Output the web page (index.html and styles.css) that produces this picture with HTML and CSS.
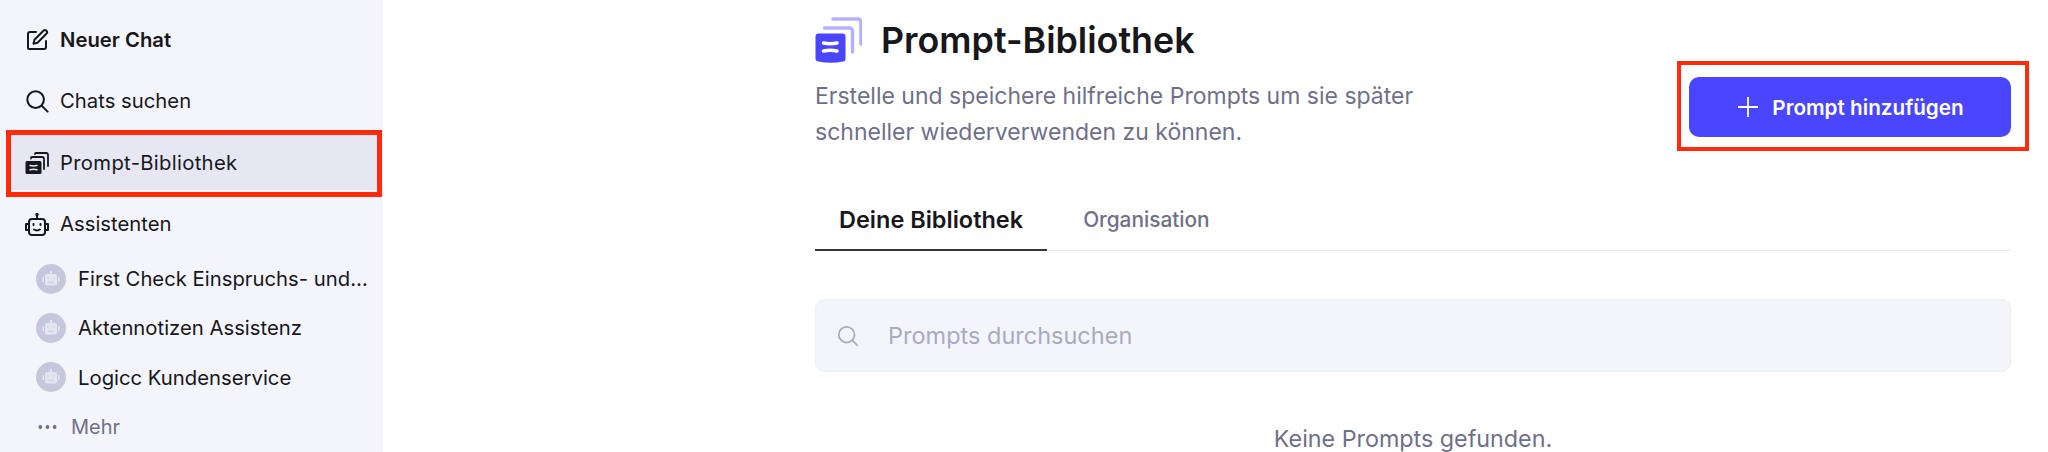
FILE: index.html
```html
<!DOCTYPE html>
<html lang="de">
<head>
<meta charset="utf-8">
<title>Prompt-Bibliothek</title>
<link rel="stylesheet" href="styles.css">
</head>
<body>
<div class="app">
  <aside class="sidebar">
    <a class="nav-item nav-strong">
      <svg class="nav-icon" viewBox="0 0 24 24" fill="none" stroke="currentColor" stroke-width="2" stroke-linecap="round" stroke-linejoin="round"><path d="M11 4H5a2 2 0 0 0-2 2v14a1 1 0 0 0 1 1h15a2 2 0 0 0 2-2v-6"/><path d="M18.400 2.800a2.100 2.100 0 0 1 3 3L12.500 14.700l-4 1 1-4z"/></svg>
      <span>Neuer Chat</span>
    </a>
    <a class="nav-item nav-search">
      <svg class="nav-icon" viewBox="-.5 -.5 26 26" fill="none" stroke="currentColor" stroke-width="2.200" stroke-linecap="round"><circle cx="11" cy="11" r="9"/><path d="M17.500 17.500 24 24"/></svg>
      <span>Chats suchen</span>
    </a>
    <a class="nav-item nav-active">
      <svg class="nav-icon" viewBox="0 0 24 24"><path d="M10 3V3a1 1 0 0 1 1-1h10a2 2 0 0 1 2 2v11" fill="none" stroke="currentColor" stroke-width="1.800" stroke-linecap="round"/><path d="M6 7.500V7a1 1 0 0 1 1-1h10a2 2 0 0 1 2 2V18" fill="none" stroke="currentColor" stroke-width="1.800" stroke-linecap="round"/><path d="M2 10h13a1.500 1.500 0 0 1 1.500 1.500V22a1.500 1.500 0 0 1-1.500 1H2A1.500 1.500 0 0 1 .5 22V11.500A1.500 1.500 0 0 1 2 10z" fill="currentColor"/><path d="M5 14.500c2.300.6 4.700.6 7 0M5 18.800c2.300-.6 4.700-.6 7 0" fill="none" stroke="#e6e7f3" stroke-width="1.500" stroke-linecap="round"/></svg>
      <span>Prompt-Bibliothek</span>
    </a>
    <a class="nav-item nav-last">
      <svg class="nav-icon" viewBox="1 0 24 24" fill="none" stroke="currentColor" stroke-width="2" stroke-linecap="round" stroke-linejoin="round"><rect x="5" y="7" width="16" height="16" rx="3"/><path d="M13 7V3"/><circle cx="13" cy="2.500" r=".8"/><path d="M5 12H2v6h3M21 12h3v6h-3"/><path d="M9.500 12v1M16.500 12v1M10 17.500c2 1.300 4 1.300 6 0"/></svg>
      <span>Assistenten</span>
    </a>
    <ul class="assistants">
      <li class="assistant">
        <svg class="avatar" viewBox="0 0 30 30"><circle cx="15" cy="15" r="15" fill="#c6c7dc"/><rect x="9" y="10" width="12" height="11.500" rx="2" fill="#e4e5f0"/><rect x="14" y="7" width="2" height="3.500" fill="#e4e5f0"/><rect x="6.500" y="13" width="1.500" height="5" fill="#e4e5f0"/><rect x="22" y="13" width="1.500" height="5" fill="#e4e5f0"/><path d="M12 13.500v1M18 13.500v1" stroke="#c6c7dc" stroke-width="1.500"/><path d="M12 17.800c2 1 4 1 6 0" stroke="#c6c7dc" stroke-width="1" fill="none"/></svg>
        <span class="assistant-name">First Check Einspruchs- und Klagebearbeitung</span>
      </li>
      <li class="assistant">
        <svg class="avatar" viewBox="0 0 30 30"><circle cx="15" cy="15" r="15" fill="#c6c7dc"/><rect x="9" y="10" width="12" height="11.500" rx="2" fill="#e4e5f0"/><rect x="14" y="7" width="2" height="3.500" fill="#e4e5f0"/><rect x="6.500" y="13" width="1.500" height="5" fill="#e4e5f0"/><rect x="22" y="13" width="1.500" height="5" fill="#e4e5f0"/><path d="M12 13.500v1M18 13.500v1" stroke="#c6c7dc" stroke-width="1.500"/><path d="M12 17.800c2 1 4 1 6 0" stroke="#c6c7dc" stroke-width="1" fill="none"/></svg>
        <span class="assistant-name">Aktennotizen Assistenz</span>
      </li>
      <li class="assistant">
        <svg class="avatar" viewBox="0 0 30 30"><circle cx="15" cy="15" r="15" fill="#c6c7dc"/><rect x="9" y="10" width="12" height="11.500" rx="2" fill="#e4e5f0"/><rect x="14" y="7" width="2" height="3.500" fill="#e4e5f0"/><rect x="6.500" y="13" width="1.500" height="5" fill="#e4e5f0"/><rect x="22" y="13" width="1.500" height="5" fill="#e4e5f0"/><path d="M12 13.500v1M18 13.500v1" stroke="#c6c7dc" stroke-width="1.500"/><path d="M12 17.800c2 1 4 1 6 0" stroke="#c6c7dc" stroke-width="1" fill="none"/></svg>
        <span class="assistant-name">Logicc Kundenservice</span>
      </li>
    </ul>
    <a class="more">
      <svg class="more-dots" viewBox="0 0 20 4"><circle cx="2.500" cy="2" r="2"/><circle cx="10" cy="2" r="2"/><circle cx="17.500" cy="2" r="2"/></svg>
      <span>Mehr</span>
    </a>
  </aside>
  <main class="main">
    <header class="page-head">
      <div class="page-intro">
        <div class="title-row">
          <svg class="title-icon" viewBox="0 0 47 47"><path d="M18 2h25a3 3 0 0 1 3 3v22" fill="none" stroke="#b3b1ff" stroke-width="3.500" stroke-linecap="round" stroke-linejoin="round"/><path d="M9.500 11h25a3 3 0 0 1 3 3v21" fill="none" stroke="#b3b1ff" stroke-width="3.500" stroke-linecap="round" stroke-linejoin="round"/><path d="M3.500 16.500h24a3 3 0 0 1 3 3V42a2.500 2.500 0 0 1-2.500 2.500c-8 1.800-16 1.800-24.500 0a3 3 0 0 1-3-2.500V19.500a3 3 0 0 1 3-3z" fill="#4a46ff"/><path d="M8.500 26c4.500 1 9 1 13.500 0M8.500 34c4.500-1 9-1 13.500 0" stroke="#fff" stroke-width="3.600" stroke-linecap="round" fill="none"/></svg>
          <h1 class="title">Prompt-Bibliothek</h1>
        </div>
        <p class="subtitle">Erstelle und speichere hilfreiche Prompts um sie später schneller wiederverwenden zu können.</p>
      </div>
      <button class="add-button" type="button">
        <svg class="add-icon" viewBox="0 0 20 20" fill="none" stroke="currentColor" stroke-width="1.800" stroke-linecap="round"><path d="M10 0v20M0 10h20"/></svg>
        <span>Prompt hinzufügen</span>
      </button>
    </header>
    <nav class="tabs">
      <a class="tab tab-active">Deine Bibliothek</a>
      <a class="tab">Organisation</a>
    </nav>
    <div class="search">
      <svg class="search-icon" viewBox="0 0 24 24" fill="none" stroke="currentColor" stroke-width="2" stroke-linecap="round"><circle cx="11" cy="11" r="9"/><path d="M18 18l5 5"/></svg>
      <span class="search-text">Prompts durchsuchen</span>
    </div>
    <p class="empty">Keine Prompts gefunden.</p>
  </main>
</div>
</body>
</html>
```

FILE: styles.css
```css
* { box-sizing: border-box; }
html, body { margin: 0; height: 100%; }
body {
  overflow: hidden;
  background: #fff;
  color: #17171c;
  font-family: Inter, "Noto Sans", sans-serif;
}
.app { display: flex; height: 452px; overflow: hidden; }

.sidebar {
  flex: 0 0 383px;
  min-width: 0;
  display: flex;
  flex-direction: column;
  padding: 12px 6px 0 11px;
  background: #f4f5fb;
}
.nav-item {
  position: relative;
  display: flex;
  align-items: center;
  gap: 11px;
  flex: 0 0 55px;
  margin-bottom: 6px;
  padding-left: 14px;
  font-size: 20.300px;
  color: #17171c;
}
.nav-strong { font-weight: 600; }
.nav-search { margin-bottom: 7px; }
.nav-active { background: #e6e7f3; letter-spacing: .3px; }
.nav-active::after {
  content: "";
  position: absolute;
  inset: -5px -5px -7px;
  border: 5px solid #ff2a0a;
}
.nav-last { margin-bottom: 0; }
.nav-icon { flex: none; width: 24px; height: 24px; }
.assistants { list-style: none; margin: 3px 0 0; padding: 0; min-width: 0; }
.assistant {
  display: flex;
  align-items: center;
  gap: 12px;
  height: 49.300px;
  padding: 0 7px 0 25px;
  font-size: 20.300px;
}
.avatar { flex: none; width: 30px; height: 30px; }
.assistant-name {
  overflow: hidden;
  white-space: nowrap;
  text-overflow: ellipsis;
}
.more {
  display: flex;
  align-items: center;
  gap: 14px;
  height: 49px;
  padding: 1px 0 0 27px;
  font-size: 20px;
  color: #6f6f8a;
}
.more-dots { width: 19px; height: 4px; fill: #6f6f8a; }

.main {
  flex: 1;
  min-width: 0;
  padding: 17px 37px 0 432px;
}
.page-head {
  display: flex;
  justify-content: space-between;
  align-items: flex-start;
}
.page-intro { width: 640px; }
.title-row { display: flex; align-items: center; gap: 19px; }
.title-icon { flex: none; width: 47px; height: 47px; }
.title {
  margin: 0;
  font-size: 35.800px;
  line-height: 47px;
  font-weight: 600;
  color: #17171c;
}
.subtitle {
  margin: 14px 0 0;
  font-size: 23px;
  line-height: 36px;
  color: #6f6f8a;
}
.add-button {
  position: relative;
  display: flex;
  align-items: center;
  justify-content: center;
  gap: 14px;
  width: 322px;
  height: 60px;
  margin-top: 60px;
  border: 0;
  border-radius: 10px;
  background: #4a46ff;
  color: #fff;
  font-family: inherit;
  font-size: 20.700px;
  font-weight: 600;
}
.add-button::after {
  content: "";
  position: absolute;
  inset: -16px -18px -14px -12px;
  border: 4px solid #ff2a0a;
}
.add-icon { width: 20px; height: 20px; margin-left: 2px; }

.tabs {
  display: flex;
  margin-top: 39px;
  border-bottom: 1px solid #e8e9f3;
}
.tab {
  margin-bottom: -1px;
  padding: 0 36px;
  height: 62px;
  line-height: 62px;
  font-size: 20.800px;
  font-weight: 500;
  color: #6f6f8a;
}
.tab-active {
  padding: 0 24px;
  font-size: 23.500px;
  font-weight: 600;
  color: #17171c;
  border-bottom: 2px solid #33333f;
}

.search {
  display: flex;
  align-items: center;
  gap: 30px;
  height: 73px;
  margin-top: 48px;
  padding-left: 21px;
  border: 1px solid #eceef6;
  border-radius: 10px;
  background: #f4f5fb;
  color: #a9aac0;
}
.search-icon { flex: none; width: 21px; height: 21px; }
.search-text { font-size: 23.500px; }
.empty {
  margin: 52px 0 0;
  text-align: center;
  font-size: 23.300px;
  color: #6f6f8a;
}
```
